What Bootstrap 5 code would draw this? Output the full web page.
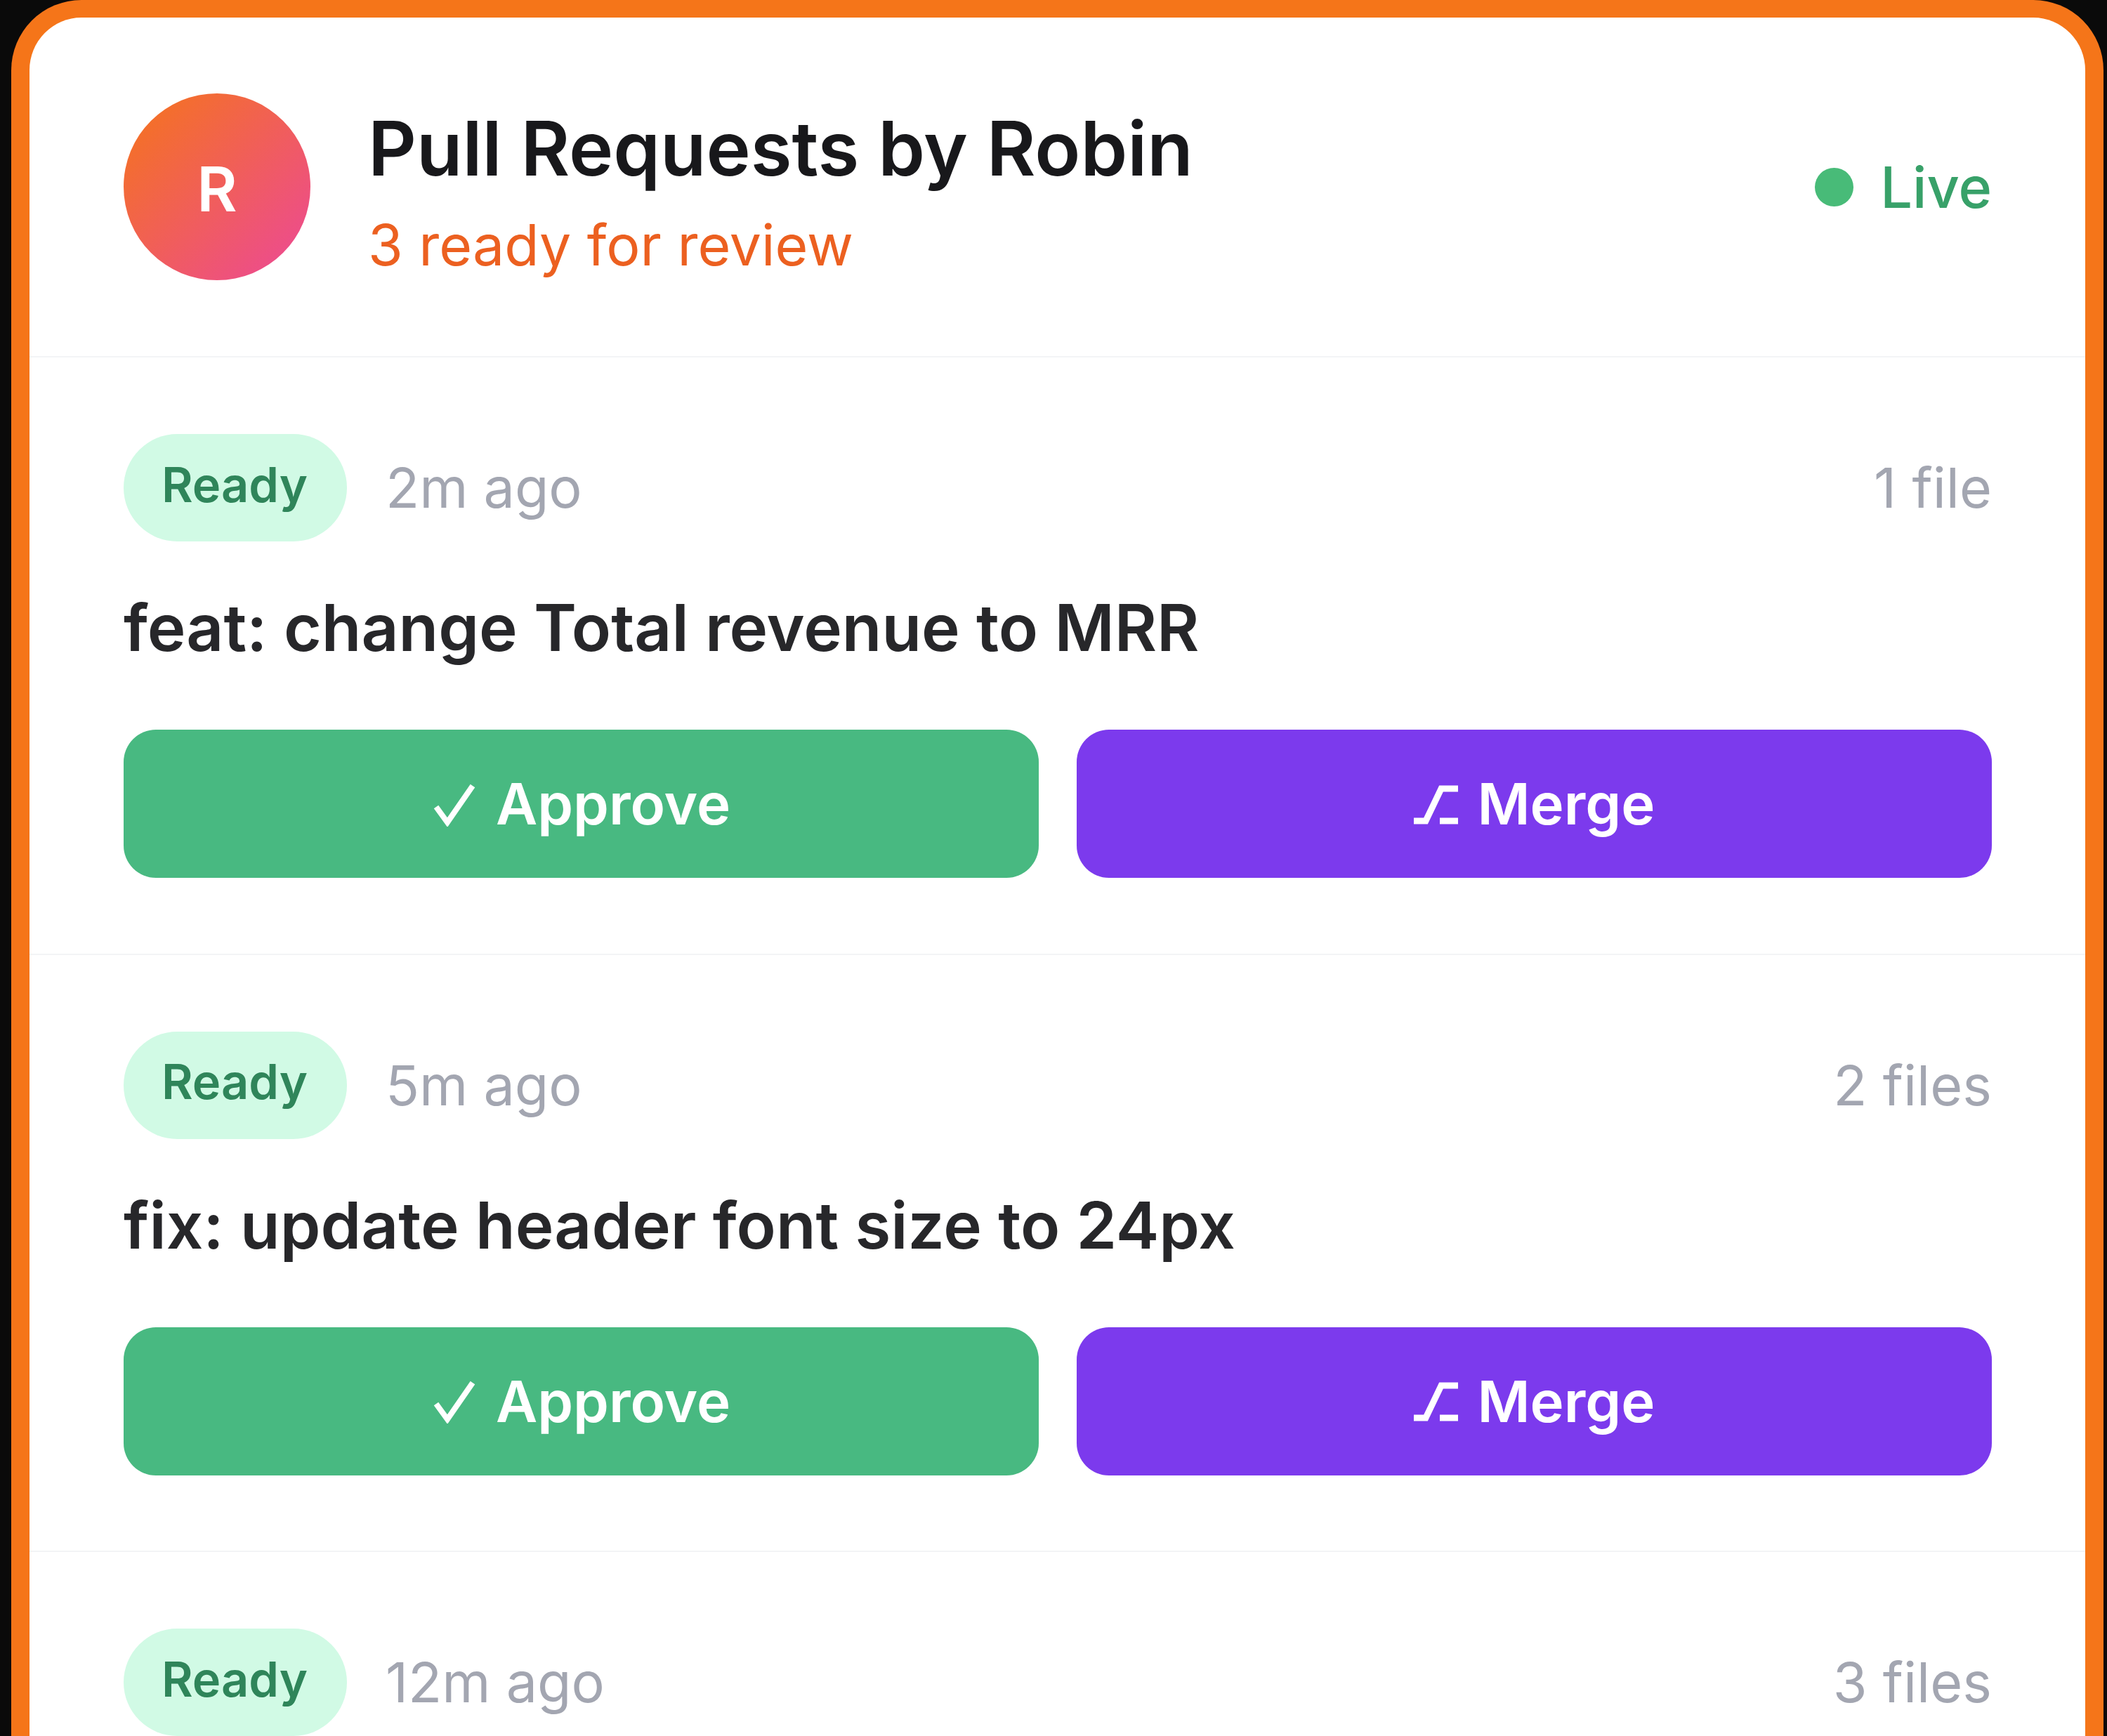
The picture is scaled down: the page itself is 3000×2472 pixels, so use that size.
<!DOCTYPE html>
<html lang="en">
<head>
  <meta charset="UTF-8">
  <meta name="viewport" content="width=device-width, initial-scale=1">
  <title>Pull Requests by Robin</title>
  <link href="https://cdn.jsdelivr.net/npm/bootstrap@5.3.0/dist/css/bootstrap.min.css" rel="stylesheet">
  <style>
    html, body {
      height: 2472px;
      overflow: hidden;
    }
    body {
      background: #0a0a0a;
      font-family: Inter, "Liberation Sans", sans-serif;
      padding: 0 5px 0 16px;
    }
    .pr-frame {
      height: 2472px;
      background: #fff;
      border: 26px solid #f57519;
      border-top-width: 25px;
      border-bottom-width: 0;
      border-radius: 100px 100px 0 0;
    }
    .pr-head {
      padding: 108px 133px 108px 134px;
      border-bottom: 2px solid #f3f4f6;
    }
    .pr-avatar {
      width: 266px;
      height: 266px;
      padding-top: 6px;
      background: linear-gradient(135deg, #f57519, #ec4899);
      color: #fff;
      font-size: 88px;
      font-weight: 600;
    }
    .pr-head-text {
      margin-left: 82px;
    }
    .pr-title {
      font-size: 107px;
      font-weight: 600;
      line-height: 148px;
      color: #18181b;
      margin: 0 0 18px;
    }
    .pr-sub {
      font-size: 80.5px;
      line-height: 92px;
      color: #ec6020;
    }
    .pr-live {
      gap: 38px;
      font-size: 81px;
      font-weight: 500;
      color: #38a169;
    }
    .pr-live-text {
      padding-top: 3px;
    }
    .pr-dot {
      width: 55px;
      height: 55px;
      background: #48bb78;
    }
    .pr-item {
      padding: 109px 133px 107.5px 134px;
      border-bottom: 2px solid #f3f4f6;
    }
    .pr-pill {
      height: 153px;
      padding: 0 56px 7px 54px;
      background: #d1fae5;
      color: #2f855a;
      font-size: 68.5px;
      font-weight: 600;
    }
    .pr-time {
      margin-left: 55px;
      font-size: 79px;
      color: #a3a6b1;
    }
    .pr-files {
      font-size: 79px;
      color: #a3a6b1;
    }
    .pr-msg {
      font-size: 92.5px;
      font-weight: 600;
      line-height: 108px;
      color: #27272a;
      margin: 68px 0 92px;
    }
    .pr-actions {
      gap: 54px;
    }
    .pr-btn {
      height: 211px;
      gap: 25px;
      padding-top: 8px;
      border: 0;
      border-radius: 46px;
      color: #fff;
      font-size: 81.5px;
      font-weight: 600;
    }
    .pr-btn:hover, .pr-btn:active {
      color: #fff;
    }
    .pr-approve { background: #48b981; }
    .pr-merge { background: #7c3aed; }
    .pr-btn svg {
      width: 66px;
      height: 62px;
    }
  </style>
</head>
<body>
  <div class="pr-frame overflow-hidden">
    <div class="pr-head d-flex align-items-center">
      <div class="pr-avatar rounded-circle d-flex align-items-center justify-content-center flex-shrink-0">R</div>
      <div class="pr-head-text flex-grow-1">
        <h1 class="pr-title">Pull Requests by Robin</h1>
        <div class="pr-sub">3 ready for review</div>
      </div>
      <div class="pr-live d-flex align-items-center">
        <span class="pr-dot rounded-circle"></span>
        <span class="pr-live-text">Live</span>
      </div>
    </div>

    <div class="pr-item">
      <div class="d-flex align-items-center">
        <span class="pr-pill rounded-pill d-inline-flex align-items-center">Ready</span>
        <span class="pr-time flex-grow-1">2m ago</span>
        <span class="pr-files">1 file</span>
      </div>
      <div class="pr-msg">feat: change Total revenue to MRR</div>
      <div class="pr-actions d-flex">
        <button type="button" class="btn pr-btn pr-approve d-flex align-items-center justify-content-center w-50">
          <svg viewBox="0 0 66 62" fill="none" stroke="currentColor" stroke-width="8"><path d="M6 34 L22 56 L58 4"/></svg>
          <span>Approve</span>
        </button>
        <button type="button" class="btn pr-btn pr-merge d-flex align-items-center justify-content-center w-50">
          <svg viewBox="0 0 66 62" fill="none" stroke="currentColor" stroke-width="9"><path d="M1 54 H18 L40 8 H64 M38 54 H64"/></svg>
          <span>Merge</span>
        </button>
      </div>
    </div>

    <div class="pr-item">
      <div class="d-flex align-items-center">
        <span class="pr-pill rounded-pill d-inline-flex align-items-center">Ready</span>
        <span class="pr-time flex-grow-1">5m ago</span>
        <span class="pr-files">2 files</span>
      </div>
      <div class="pr-msg">fix: update header font size to 24px</div>
      <div class="pr-actions d-flex">
        <button type="button" class="btn pr-btn pr-approve d-flex align-items-center justify-content-center w-50">
          <svg viewBox="0 0 66 62" fill="none" stroke="currentColor" stroke-width="8"><path d="M6 34 L22 56 L58 4"/></svg>
          <span>Approve</span>
        </button>
        <button type="button" class="btn pr-btn pr-merge d-flex align-items-center justify-content-center w-50">
          <svg viewBox="0 0 66 62" fill="none" stroke="currentColor" stroke-width="9"><path d="M1 54 H18 L40 8 H64 M38 54 H64"/></svg>
          <span>Merge</span>
        </button>
      </div>
    </div>

    <div class="pr-item">
      <div class="d-flex align-items-center">
        <span class="pr-pill rounded-pill d-inline-flex align-items-center">Ready</span>
        <span class="pr-time flex-grow-1">12m ago</span>
        <span class="pr-files">3 files</span>
      </div>
    </div>
  </div>

  <script src="https://cdn.jsdelivr.net/npm/bootstrap@5.3.0/dist/js/bootstrap.bundle.min.js"></script>
</body>
</html>
